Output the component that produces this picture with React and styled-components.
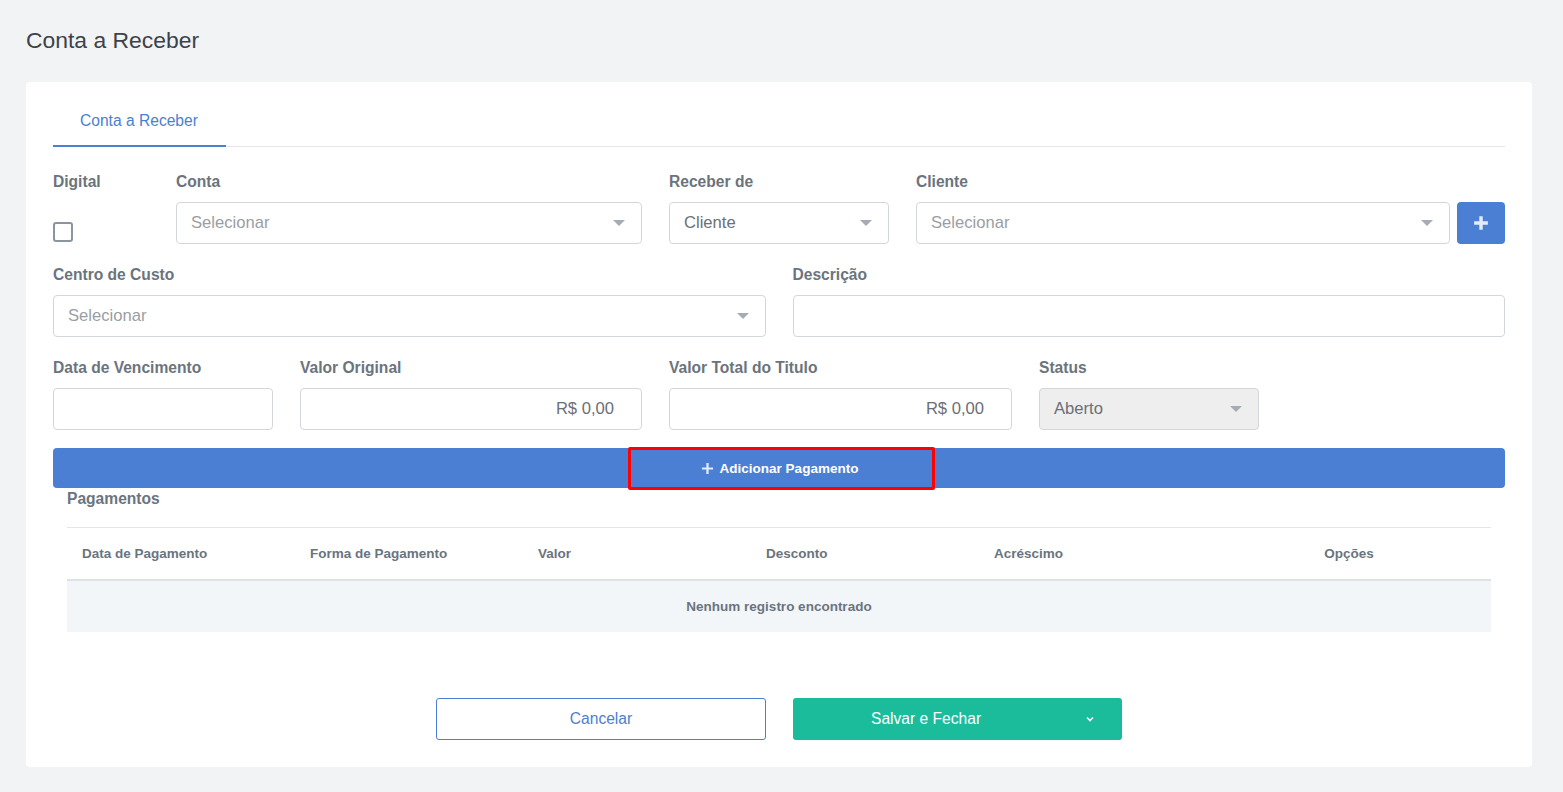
import React from 'react';
import styled, { createGlobalStyle } from 'styled-components';

const Global = createGlobalStyle`
  body {
    margin: 0;
    background: #f2f3f5;
    font-family: "Liberation Sans", Arial, sans-serif;
  }
  * { box-sizing: border-box; }
`;

const Page = styled.div`
  padding: 27px 31px 25px 26px;
  min-height: 792px;
`;

const Title = styled.h1`
  margin: 0 0 29px;
  font-size: 22.9px;
  line-height: 26px;
  font-weight: 400;
  color: #3d4249;
`;

const Card = styled.div`
  background: #fff;
  border-radius: 4px;
  padding: 0 27px 27px;
`;

const Tabs = styled.div`
  display: flex;
  border-bottom: 1px solid #e4e6e9;
  margin-bottom: 24px;
`;

const Tab = styled.div`
  padding: 29px 28px 14px 27px;
  font-size: 15.6px;
  line-height: 20px;
  color: #4a7fd4;
  border-bottom: 2px solid #4a7fd4;
  margin-bottom: -1px;
`;

const Row = styled.div`
  display: flex;
  gap: 27px;
  margin-bottom: 20px;
`;

const Field = styled.div`
  display: flex;
  flex-direction: column;
  width: ${(p) => (p.$w ? `${p.$w}px` : 'auto')};
  flex: ${(p) => (p.$w ? 'none' : '1')};
  min-width: 0;
`;

const Label = styled.div`
  font-size: 15.6px;
  line-height: 19px;
  padding-top: 1px;
  font-weight: 700;
  color: #6b747d;
  margin-bottom: 11px;
`;

const Control = styled.div`
  height: 42px;
  border: 1px solid #d3d7db;
  border-radius: 4px;
  background: ${(p) => (p.$disabled ? '#eeeeee' : '#fff')};
  display: flex;
  align-items: center;
  justify-content: ${(p) => (p.$right ? 'flex-end' : 'space-between')};
  padding: ${(p) => (p.$right ? '0 27px 0 15px' : '0 16px 0 14px')};
  font-size: 16.6px;
  color: ${(p) => (p.$placeholder ? '#9a9ea3' : '#6b7078')};
  flex: none;
`;

const Caret = styled.span`
  width: 0;
  height: 0;
  border-left: 6px solid transparent;
  border-right: 6px solid transparent;
  border-top: 6px solid #a5acb3;
`;

const CheckWrap = styled.div`
  height: 42px;
  display: flex;
  align-items: flex-end;
  padding-bottom: 2px;
`;

const Check = styled.span`
  width: 20px;
  height: 20px;
  border: 2px solid #8c959d;
  border-radius: 3px;
`;

const InputGroup = styled.div`
  display: flex;
  gap: 7px;
  & > ${Control} {
    flex: 1;
  }
`;

const IconButton = styled.button`
  width: 48px;
  height: 42px;
  border: none;
  border-radius: 4px;
  background: #4a7fd4;
  display: flex;
  align-items: center;
  justify-content: center;
  padding: 0;
`;

const AddButton = styled.button`
  width: 100%;
  height: 40px;
  border: none;
  border-radius: 4px;
  background: #4a7fd4;
  margin-top: -2px;
  display: flex;
  align-items: center;
  justify-content: center;
  padding: 0;
  overflow: visible;
  font-family: "Liberation Sans", Arial, sans-serif;
`;

const Highlight = styled.span`
  width: 307px;
  height: 43px;
  border: 3px solid #f00;
  border-radius: 2px;
  margin-left: 5px;
  display: flex;
  align-items: center;
  justify-content: center;
  gap: 6px;
  padding-right: 4px;
  color: #fff;
  font-size: 13.5px;
  font-weight: 700;
`;

const Section = styled.div`
  padding: 0 14px;
`;

const SectionTitle = styled.div`
  font-size: 15.6px;
  line-height: 18px;
  font-weight: 700;
  color: #6b747d;
  margin: 2px 0 19px;
`;

const Table = styled.table`
  width: 100%;
  border-collapse: collapse;
  font-size: 13.5px;
  font-weight: 700;
  color: #6b747d;
`;

const Th = styled.th`
  text-align: ${(p) => (p.$center ? 'center' : 'left')};
  width: ${(p) => (p.$w ? `${p.$w}px` : 'auto')};
  padding: 0 15px;
  height: 52px;
  border-top: 1px solid #e3e6e9;
  border-bottom: 2px solid #dee2e6;
  font-weight: 700;
`;

const Td = styled.td`
  height: 52px;
  background: #f3f6f9;
  text-align: center;
`;

const Footer = styled.div`
  display: flex;
  justify-content: center;
  gap: 27px;
  margin-top: 66px;
`;

const OutlineButton = styled.button`
  width: 330px;
  height: 42px;
  border: 1px solid #4a7fd4;
  border-radius: 3px;
  background: #fff;
  color: #4a7fd4;
  font-size: 15.6px;
  font-family: "Liberation Sans", Arial, sans-serif;
`;

const SaveButton = styled.button`
  width: 329px;
  height: 42px;
  border: none;
  border-radius: 3px;
  background: #1abc9c;
  color: #fff;
  font-size: 15.6px;
  font-family: "Liberation Sans", Arial, sans-serif;
  display: flex;
  align-items: center;
  justify-content: space-between;
  padding: 0 28px 0 78px;
`;

const Plus = ({ size = 14, stroke = 3 }) => (
  <svg width={size} height={size} viewBox="0 0 14 14">
    <path d="M1 7h12M7 1v12" stroke="#fff" strokeWidth={stroke} strokeOpacity="0.85" />
  </svg>
);

const Chevron = () => (
  <svg width="8" height="6" viewBox="0 0 8 6">
    <path d="M1 1.5l3 3 3-3" stroke="#fff" strokeWidth="1.6" fill="none" />
  </svg>
);

const Select = ({ value, placeholder, disabled }) => (
  <Control $placeholder={placeholder} $disabled={disabled}>
    <span>{value}</span>
    <Caret />
  </Control>
);

const columns = [
  ['Data de Pagamento', 228],
  ['Forma de Pagamento', 228],
  ['Valor', 228],
  ['Desconto', 228],
  ['Acréscimo', 228],
];

export default function App() {
  return (
    <Page>
      <Global />
      <Title>Conta a Receber</Title>
      <Card>
        <Tabs>
          <Tab>Conta a Receber</Tab>
        </Tabs>

        <Row>
          <Field $w={96}>
            <Label>Digital</Label>
            <CheckWrap>
              <Check />
            </CheckWrap>
          </Field>
          <Field $w={466}>
            <Label>Conta</Label>
            <Select value="Selecionar" placeholder />
          </Field>
          <Field $w={220}>
            <Label>Receber de</Label>
            <Select value="Cliente" />
          </Field>
          <Field>
            <Label>Cliente</Label>
            <InputGroup>
              <Select value="Selecionar" placeholder />
              <IconButton>
                <Plus size={16} stroke={3} />
              </IconButton>
            </InputGroup>
          </Field>
        </Row>

        <Row>
          <Field>
            <Label>Centro de Custo</Label>
            <Select value="Selecionar" placeholder />
          </Field>
          <Field>
            <Label>Descrição</Label>
            <Control />
          </Field>
        </Row>

        <Row>
          <Field $w={220}>
            <Label>Data de Vencimento</Label>
            <Control />
          </Field>
          <Field $w={342}>
            <Label>Valor Original</Label>
            <Control $right>R$ 0,00</Control>
          </Field>
          <Field $w={343}>
            <Label>Valor Total do Titulo</Label>
            <Control $right>R$ 0,00</Control>
          </Field>
          <Field $w={220}>
            <Label>Status</Label>
            <Select value="Aberto" disabled />
          </Field>
        </Row>

        <AddButton>
          <Highlight>
            <Plus size={13} stroke={2.4} />
            Adicionar Pagamento
          </Highlight>
        </AddButton>

        <Section>
          <SectionTitle>Pagamentos</SectionTitle>
          <Table>
            <thead>
              <tr>
                {columns.map(([name, w]) => (
                  <Th key={name} $w={w}>{name}</Th>
                ))}
                <Th $center>Opções</Th>
              </tr>
            </thead>
            <tbody>
              <tr>
                <Td colSpan={6}>Nenhum registro encontrado</Td>
              </tr>
            </tbody>
          </Table>
        </Section>

        <Footer>
          <OutlineButton>Cancelar</OutlineButton>
          <SaveButton>
            <span>Salvar e Fechar</span>
            <Chevron />
          </SaveButton>
        </Footer>
      </Card>
    </Page>
  );
}
